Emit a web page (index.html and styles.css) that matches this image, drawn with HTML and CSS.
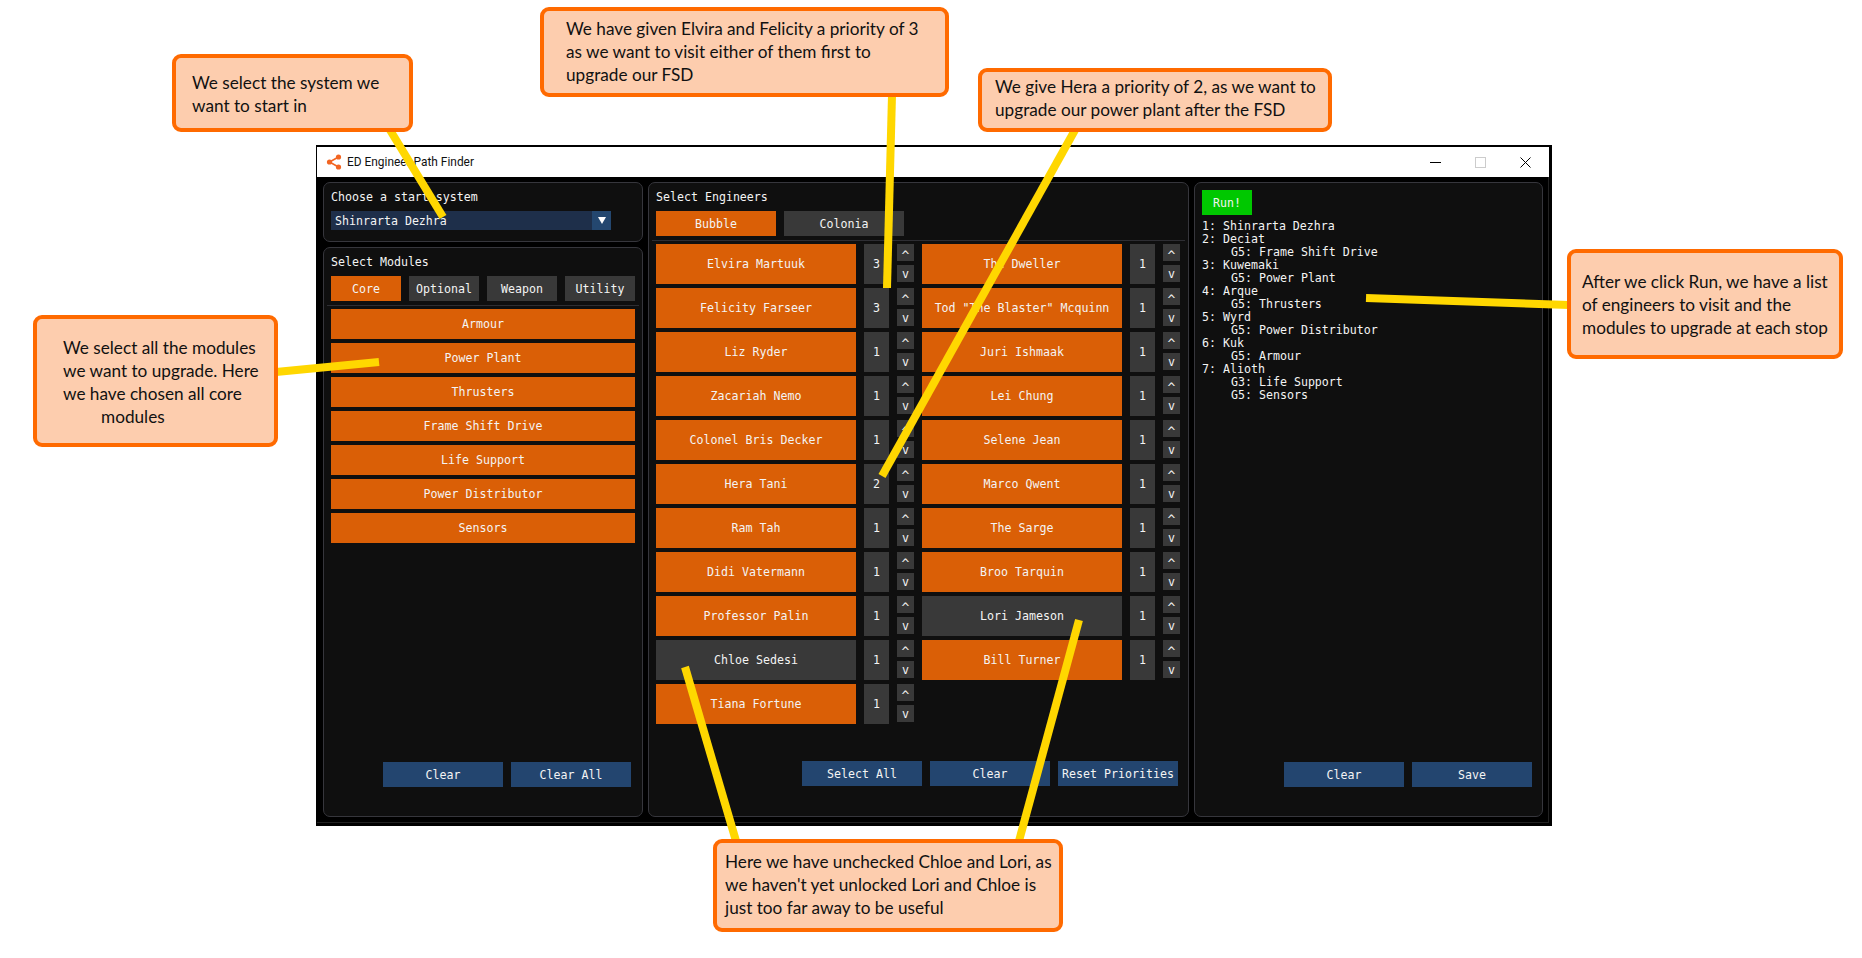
FILE: index.html
```html
<!DOCTYPE html>
<html>
 <head>
  <title>ED Engineer Path Finder</title>
  <link rel="stylesheet" href="styles.css">
 </head>
 <body>
  <div class="window">
   <div class="titlebar">
    <svg class="logo" width="16" height="16" viewBox="0 0 16 16"><path d="M12.5 3 3.5 8l9 5" fill="none" stroke="#f26522" stroke-width="1.6"/><circle cx="12.5" cy="3" r="2.6" fill="#f26522"/><circle cx="3.5" cy="8" r="2.6" fill="#f26522"/><circle cx="12.5" cy="13" r="2.6" fill="#f26522"/></svg>
    <span class="title">ED Engineer Path Finder</span>
    <span class="controls">
     <svg width="11" height="11" viewBox="0 0 11 11"><path d="M0 5.5h11" stroke="#000" stroke-width="1"/></svg>
     <svg width="11" height="11" viewBox="0 0 11 11"><rect x=".5" y=".5" width="10" height="10" fill="none" stroke="#ccc"/></svg>
     <svg width="11" height="11" viewBox="0 0 11 11"><path d="M.5.5l10 10M10.5.5l-10 10" stroke="#000" stroke-width="1"/></svg>
    </span>
   </div>
   <div class="panels">
    <div class="col-left">
     <div class="panel start">
      <div class="label">Choose a start system</div>
      <div class="combo"><span>Shinrarta Dezhra</span><b><i></i></b></div>
     </div>
     <div class="panel modules">
      <div class="label">Select Modules</div>
      <div class="tabs">
       <a class="btn on">Core</a><a class="btn">Optional</a><a class="btn">Weapon</a><a class="btn">Utility</a>
      </div>
      <div class="sep"></div>
      <div class="list">
       <a class="btn on">Armour</a>
       <a class="btn on">Power Plant</a>
       <a class="btn on">Thrusters</a>
       <a class="btn on">Frame Shift Drive</a>
       <a class="btn on">Life Support</a>
       <a class="btn on">Power Distributor</a>
       <a class="btn on">Sensors</a>
      </div>
      <div class="actions">
       <a class="btn blue">Clear</a><a class="btn blue">Clear All</a>
      </div>
     </div>
    </div>
    <div class="panel engineers">
     <div class="label">Select Engineers</div>
     <div class="tabs">
      <a class="btn on">Bubble</a><a class="btn">Colonia</a>
     </div>
     <div class="sep"></div>
     <div class="grid" id="grid"></div>
     <div class="actions">
      <a class="btn blue">Select All</a><a class="btn blue">Clear</a><a class="btn blue">Reset Priorities</a>
     </div>
    </div>
    <div class="panel route">
     <a class="btn run">Run!</a>
     <div class="stops">
      <div>1: Shinrarta Dezhra</div>
      <div>2: Deciat</div>
      <div class="mod">G5: Frame Shift Drive</div>
      <div>3: Kuwemaki</div>
      <div class="mod">G5: Power Plant</div>
      <div>4: Arque</div>
      <div class="mod">G5: Thrusters</div>
      <div>5: Wyrd</div>
      <div class="mod">G5: Power Distributor</div>
      <div>6: Kuk</div>
      <div class="mod">G5: Armour</div>
      <div>7: Alioth</div>
      <div class="mod">G3: Life Support</div>
      <div class="mod">G5: Sensors</div>
     </div>
     <div class="actions">
      <a class="btn blue">Clear</a><a class="btn blue">Save</a>
     </div>
    </div>
   </div>
  </div>

  <svg class="lines" width="1862" height="958">
   <g stroke="#ffd700" stroke-width="8" fill="none">
    <path d="M390 130 443 217"/>
    <path d="M892 95 887 288"/>
    <path d="M1075 130 882 476"/>
    <path d="M276 372 379 362"/>
    <path d="M1366 298 1569 305"/>
    <path d="M685 667 736 841"/>
    <path d="M1079 620 1019 841"/>
   </g>
  </svg>

  <div class="note n1">We select the system we<br>want to start in</div>
  <div class="note n2">We have given Elvira and Felicity a priority of 3<br>as we want to visit either of them first to<br>upgrade our FSD</div>
  <div class="note n3">We give Hera a priority of 2, as we want to<br>upgrade our power plant after the FSD</div>
  <div class="note n4">We select all the modules<br>we want to upgrade. Here<br>we have chosen all core<br><span class="ind">modules</span></div>
  <div class="note n5">After we click Run, we have a list<br>of engineers to visit and the<br>modules to upgrade at each stop</div>
  <div class="note n6">Here we have unchecked Chloe and Lori, as<br>we haven't yet unlocked Lori and Chloe is<br>just too far away to be useful</div>

  <script>
   var rows = [
    ['Elvira Martuuk', 3, 1], ['The Dweller', 1, 1],
    ['Felicity Farseer', 3, 1], ['Tod "The Blaster" Mcquinn', 1, 1],
    ['Liz Ryder', 1, 1], ['Juri Ishmaak', 1, 1],
    ['Zacariah Nemo', 1, 1], ['Lei Chung', 1, 1],
    ['Colonel Bris Decker', 1, 1], ['Selene Jean', 1, 1],
    ['Hera Tani', 2, 1], ['Marco Qwent', 1, 1],
    ['Ram Tah', 1, 1], ['The Sarge', 1, 1],
    ['Didi Vatermann', 1, 1], ['Broo Tarquin', 1, 1],
    ['Professor Palin', 1, 1], ['Lori Jameson', 1, 0],
    ['Chloe Sedesi', 1, 0], ['Bill Turner', 1, 1],
    ['Tiana Fortune', 1, 1]
   ];
   document.getElementById('grid').innerHTML = rows.map(function (r) {
    return '<div class="eng"><a class="btn name' + (r[2] ? ' on' : '') + '">' + r[0].replace(/"/g, '&quot;') + '</a>' +
     '<span class="prio">' + r[1] + '</span>' +
     '<span class="arrows"><a class="btn up">^</a><a class="btn">v</a></span></div>';
   }).join('');
  </script>
 </body>
</html>
```

FILE: styles.css
```css
* {box-sizing:border-box}
html, body {margin:0; background:#fff}
body {width:1862px; height:958px; overflow:hidden; position:relative; padding:145px 0 0 316px}
a, .label, .combo, .stops, .prio {font-family:"DejaVu Sans Mono", monospace; font-size:11.62px; color:#f4f4f4; white-space:nowrap}

.window {width:1236px; height:681px; background:#000; padding:2px 3px 0 1px; display:flex; flex-direction:column}
.titlebar {height:30px; background:#fff; display:flex; align-items:center; padding-left:9px; flex:none}
.logo {margin-right:5px}
.title {font:11.9px Roboto, sans-serif; color:#111}
.controls {margin-left:auto; display:flex; gap:34px; padding-right:18px; align-items:center}
.controls svg {display:block}

.panels {display:flex; gap:5px; padding:5px 5px 0 6px; height:646px; border:solid #222; border-width:0 1px 1px 0}
.col-left {width:320px; height:635px; display:flex; flex-direction:column; gap:5px}
.panel {background:#0f0f0f; border:1px solid #36363c; border-radius:7px; padding:7px; position:relative; height:635px}
.start {height:60px}
.modules {flex:1}
.engineers {width:541px}
.route {width:349px}
.label {height:21px; line-height:14px}

.btn {display:flex; align-items:center; justify-content:center; background:#393939; height:25px; padding-top:1px}
.btn.on {background:#da5f06}
.btn.blue {background:#23456f}
.btn.run {background:#00c800; width:50px}

.combo {display:flex; justify-content:space-between; align-items:center; width:280px; height:19px; background:#1e2f4a; padding-left:4px}
.combo b {width:19px; height:19px; background:#24476f; display:flex; align-items:center; justify-content:center}
.combo i {border:4px solid transparent; border-top:7px solid #fff; border-bottom:0; border-left-width:4.5px; border-right-width:4.5px}

.tabs {display:flex; gap:8px}
.tabs .btn {width:70px}
.engineers .tabs .btn {width:120px}
.sep {height:1px; background:#2e2e33; margin:4px -4px 3px}

.list {display:flex; flex-direction:column; gap:4px}
.list .btn {height:30px; padding-top:0}

.actions {position:absolute; display:flex; gap:8px; bottom:29px}
.modules .actions {right:11px}
.modules .actions .btn {width:120px}
.engineers .actions {right:10px; bottom:30px}
.engineers .actions .btn {width:120px}
.route .actions {right:10px; bottom:29px}
.route .actions .btn {width:120px}

.grid {display:grid; grid-template-columns:1fr 1fr; column-gap:8px; row-gap:4px; width:524px}
.eng {display:flex; height:40px}
.eng .name {width:200px; height:40px; padding-top:0}
.prio {width:25px; margin-left:8px; background:#393939; display:flex; align-items:center; justify-content:center}
.arrows {width:17px; margin-left:8px; display:flex; flex-direction:column; gap:4px}
.arrows .btn {height:17px}
.arrows .up {padding-top:5px; font-size:13px}

.stops {margin-top:5px; line-height:13px}
.mod {padding-left:29px}

.lines {position:absolute; left:0; top:0}
.note {position:absolute; background:#fdcdae; border:4px solid #ff6a00; border-radius:9px; font:17.2px/23px Lato, sans-serif; color:#111; white-space:nowrap}
.n1 {left:172px; top:54px; width:241px; height:78px; padding:13px 0 0 16px}
.n2 {left:540px; top:7px; width:409px; height:90px; padding:6px 0 0 22px}
.n3 {left:978px; top:68px; width:354px; height:64px; padding:3px 0 0 13px}
.n4 {left:33px; top:315px; width:245px; height:132px; padding:17px 0 0 26px}
.ind {padding-left:38px}
.n5 {left:1567px; top:249px; width:276px; height:110px; padding:17px 0 0 11px}
.n6 {left:713px; top:839px; width:350px; height:93px; padding:7px 0 0 8px}
```
